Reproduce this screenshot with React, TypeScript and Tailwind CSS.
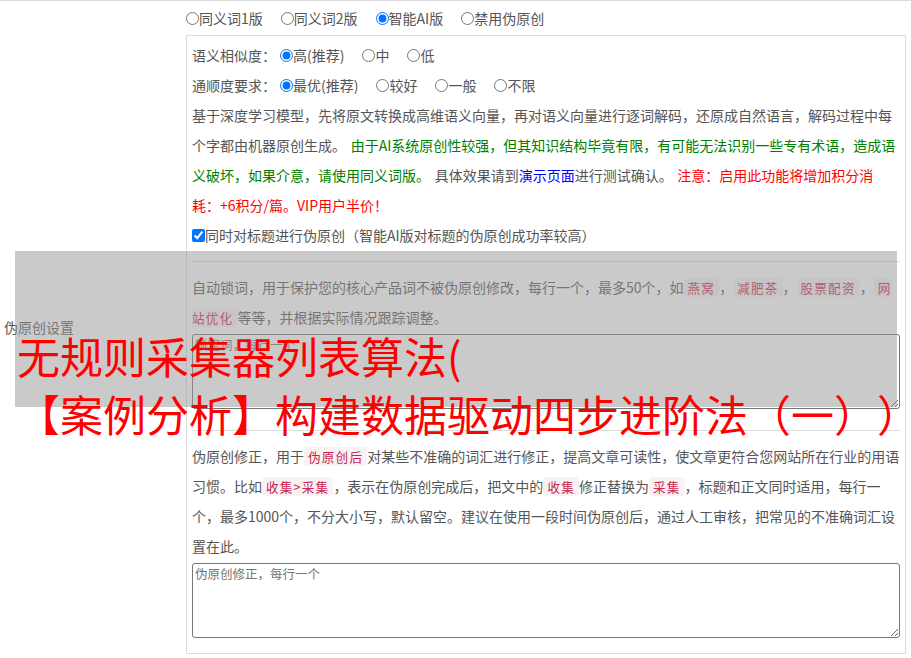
import type { ReactNode } from "react";

function Radio({ name, label, checked }: { name: string; label: string; checked?: boolean }) {
  return (
    <label className="mr-[18px] inline-flex items-center">
      <input type="radio" name={name} defaultChecked={checked} className="m-0 h-[13px] w-[13px]" />
      <span>{label}</span>
    </label>
  );
}

function Code({ children }: { children: ReactNode }) {
  return (
    <code className="rounded-[4px] bg-[#f9f2f4] px-1 font-['Noto_Sans_CJK_SC',sans-serif] text-[12.6px] leading-none tracking-[1.2px] text-[#c7254e]">
      {children}
    </code>
  );
}

function Divider({ top }: { top: string }) {
  return <div className={`${top} mb-[10px] border-t border-[#ddd]`} />;
}

export default function App() {
  return (
    <div className="relative min-h-[658px] w-full border-t border-[#ddd] bg-white font-['Noto_Sans_CJK_SC',sans-serif] text-[14px] text-[#555] [text-spacing-trim:space-all]">
      <div className="flex items-center">
        <div className="w-[186px] shrink-0 pl-[4px]">伪原创设置</div>

        <div className="flex-1">
          <div className="flex h-[34px] items-center">
            <Radio name="mode" label="同义词1版" />
            <Radio name="mode" label="同义词2版" />
            <Radio name="mode" label="智能AI版" checked />
            <Radio name="mode" label="禁用伪原创" />
          </div>

          <div className="w-[720px] border border-[#ddd] px-[5px] pb-[15px] pt-[4px] leading-[30px]">
            <div className="flex items-center">
              <span className="mr-[4px]">语义相似度：</span>
              <Radio name="sim" label="高(推荐)" checked />
              <Radio name="sim" label="中" />
              <Radio name="sim" label="低" />
            </div>
            <div className="flex items-center">
              <span className="mr-[4px]">通顺度要求：</span>
              <Radio name="flu" label="最优(推荐)" checked />
              <Radio name="flu" label="较好" />
              <Radio name="flu" label="一般" />
              <Radio name="flu" label="不限" />
            </div>
            <p className="[word-spacing:1.5px]">
              基于深度学习模型，先将原文转换成高维语义向量，再对语义向量进行逐词解码，还原成自然语言，解码过程中每个字都由机器原创生成。{" "}
              <span className="text-[#008000]">
                由于AI系统原创性较强，但其知识结构毕竟有限，有可能无法识别一些专有术语，造成语义破坏，如果介意，请使用同义词版。
              </span>{" "}
              具体效果请到<span className="text-[#00f]">演示页面</span>进行测试确认。{" "}
              <span className="text-[#f00]">注意：启用此功能将增加积分消耗：+6积分/篇。VIP用户半价！</span>
            </p>
            <label className="flex items-center">
              <input type="checkbox" defaultChecked className="m-0 h-[13px] w-[13px]" />
              <span>同时对标题进行伪原创（智能AI版对标题的伪原创成功率较高）</span>
            </label>

            <Divider top="mt-[11px]" />

            <p>
              自动锁词，用于保护您的核心产品词不被伪原创修改，每行一个，最多50个，如<Code>燕窝</Code>，<Code>减肥茶</Code>，
              <Code>股票配资</Code>，<Code>网站优化</Code>等等，并根据实际情况跟踪调整。
            </p>
            <textarea
              placeholder="锁定词，每行一个"
              className="mt-[2px] block h-[75px] w-full rounded-[3px] border border-[#767676] p-[2px] text-[12.5px] leading-[16px] placeholder:text-[#757575]"
            />

            <Divider top="mt-[21px]" />

            <p>
              伪原创修正，用于<Code>伪原创后</Code>对某些不准确的词汇进行修正，提高文章可读性，使文章更符合您网站所在行业的用语习惯。比如
              <Code>收集&gt;采集</Code>，表示在伪原创完成后，把文中的<Code>收集</Code>修正替换为<Code>采集</Code>
              ，标题和正文同时适用，每行一个，最多1000个，不分大小写，默认留空。建议在使用一段时间伪原创后，通过人工审核，把常见的不准确词汇设置在此。
            </p>
            <textarea
              placeholder="伪原创修正，每行一个"
              className="mt-[2px] block h-[75px] w-full rounded-[3px] border border-[#767676] p-[2px] text-[12.5px] leading-[16px] placeholder:text-[#757575]"
            />
          </div>
        </div>
      </div>

      <div className="absolute left-[15px] top-[250px] h-[156px] w-[882px] bg-[rgba(150,150,150,0.5)]" />

      <div className="absolute left-[17px] top-[325px] whitespace-nowrap text-[43px] leading-[58px] text-[#f00]">
        <div>无规则采集器列表算法(</div>
        <div>【案例分析】构建数据驱动四步进阶法（一））</div>
      </div>
    </div>
  );
}
